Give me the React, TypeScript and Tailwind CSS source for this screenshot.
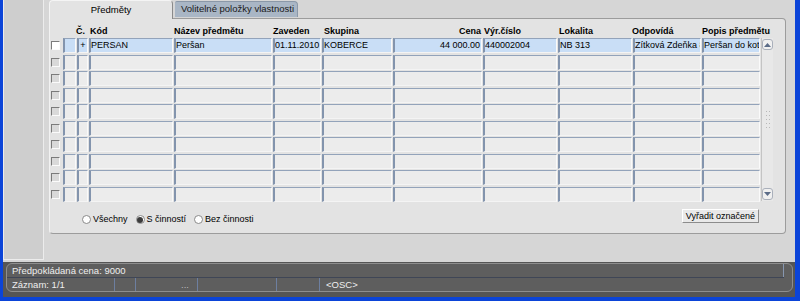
import React from "react";

const cells = [
  "w-[84px]",
  "w-[98px]",
  "w-[48px]",
  "w-[70px]",
  "w-[89px]",
  "w-[74px]",
  "w-[74px]",
  "w-[68px]",
  "w-[58px]",
];

const firstRow = [
  "PERSAN",
  "Peršan",
  "01.11.2010",
  "KOBERCE",
  "44 000.00",
  "440002004",
  "NB 313",
  "Zítková Zdeňka 8",
  "Peršan do kote",
];

function Cell({ w, text, active, right }: { w: string; text?: string; active?: boolean; right?: boolean }) {
  return (
    <div
      className={`${w} h-[15px] mr-px shrink-0 overflow-hidden whitespace-nowrap border-l-2 border-t border-r border-b border-l-[#8394ad] border-t-[#93a3ba] border-r-[#fafafa] border-b-[#f4f4f4] flex items-center leading-none text-[9px] text-black ${
        active ? "bg-[#c9def6]" : "bg-[#ececec]"
      } ${right ? "justify-end pr-[1px]" : "pl-0"}`}
    >
      {text}
    </div>
  );
}

function Row({ first }: { first?: boolean }) {
  return (
    <div className="flex h-[16.5px] items-start">
      <div className="w-[12px] h-[15px] flex items-center shrink-0">
        <div
          className={`w-[9px] h-[9px] border-t border-l border-[#7b7b7b] border-r border-b border-r-[#fbfbfb] border-b-[#fbfbfb] ${
            first ? "bg-white" : "bg-[#d9d9d9]"
          }`}
        />
      </div>
      <div className={`w-[13px] h-[15px] mr-px shrink-0 border-l-2 border-t border-r border-b border-l-[#8394ad] border-t-[#93a3ba] border-r-[#fafafa] border-b-[#f4f4f4] ${first ? "bg-[#c9def6]" : "bg-[#ececec]"}`} />
      <div className={`w-[11px] h-[15px] mr-px shrink-0 border-l-2 border-t border-r border-b border-l-[#8394ad] border-t-[#93a3ba] border-r-[#fafafa] border-b-[#f4f4f4] flex items-center justify-center text-[9px] leading-none ${first ? "bg-[#c9def6]" : "bg-[#ececec]"}`}>
        {first ? "+" : ""}
      </div>
      {cells.map((w, i) => (
        <Cell key={i} w={w} text={first ? firstRow[i] : ""} active={first} right={i === 4} />
      ))}
    </div>
  );
}

function Radio({ label, checked }: { label: string; checked?: boolean }) {
  return (
    <div className="flex items-center gap-[2px]">
      <div className="w-[9px] h-[9px] rounded-full border border-[#8a8a8a] bg-white flex items-center justify-center">
        {checked && <div className="w-[6px] h-[6px] rounded-full bg-[#3c3c3c]" />}
      </div>
      <span className="text-[9px] leading-none text-black">{label}</span>
    </div>
  );
}

export default function App() {
  return (
    <div className="w-[800px] h-[301px] bg-[#0b44d8] pl-[3px] pr-[5px] pb-[4px] flex flex-col font-['Liberation_Sans',Arial,sans-serif]">
      <div className="flex h-[262px] bg-[#d6d6d6]">
        <div className="w-[41px] h-[260px] bg-[#cecece] border-l border-r border-b border-[#ececec] shrink-0" />
        <div className="ml-[5px] w-[737px] flex flex-col">
          {/* tabs */}
          <div className="flex h-[18px] items-end">
            <div className="w-[124px] h-[19px] -mb-px bg-[#e3e3e3] border-l border-r border-t border-l-[#f4f4f4] border-t-[#f4f4f4] border-r-[#8a8a8a] rounded-t-[4px] flex items-center justify-center text-[9.5px] text-black z-10">
              Předměty
            </div>
            <div className="ml-[2px] w-[123px] h-[16px] mb-[1px] bg-[#a9b6c5] border-t border-r border-[#8b98a8] rounded-tr-[4px] rounded-tl-[2px] flex items-center pl-[6px] text-[9.5px] text-[#1a1a1a] whitespace-nowrap">
              Volitelné položky vlastnosti
            </div>
          </div>
          {/* panel */}
          <div className="h-[216px] bg-[#e3e3e3] border border-[#9c9c9c] border-l-[#f2f2f2] rounded-b-[4px] rounded-tr-[4px] pl-[1px] flex flex-col">
            <div className="flex h-[19px] items-end pb-[2px] text-[9px] font-bold text-black leading-none whitespace-nowrap">
              <div className="w-[25px] shrink-0" />
              <div className="w-[13px] shrink-0">Č.</div>
              <div className="w-[85px] shrink-0 pl-[1px]">Kód</div>
              <div className="w-[99px] shrink-0">Název předmětu</div>
              <div className="w-[49px] shrink-0">Zaveden</div>
              <div className="w-[71px] shrink-0 pl-[2px]">Skupina</div>
              <div className="w-[90px] shrink-0 text-right pr-[2px]">Cena</div>
              <div className="w-[75px] shrink-0 pl-[1px]">Výr.číslo</div>
              <div className="w-[75px] shrink-0 pl-[1px]">Lokalita</div>
              <div className="w-[69px] shrink-0 -ml-px">Odpovídá</div>
              <div className="w-[70px] shrink-0 pl-px">Popis předmětu</div>
            </div>
            <div className="flex">
              <div className="flex flex-col">
                <Row first />
                {Array.from({ length: 9 }, (_, i) => (
                  <Row key={i} />
                ))}
              </div>
              {/* scrollbar */}
              <div className="w-[12px] h-[163px] bg-[#e8e8e8] border-l border-[#c4c4c4] flex flex-col justify-between items-center py-[1px]">
                <div className="w-[11px] h-[11px] rounded-[3px] border border-[#aab0bb] bg-[#f0f0f0] flex items-center justify-center">
                  <svg width="7" height="4" viewBox="0 0 7 4"><path d="M0 4 L3.5 0 L7 4 Z" fill="#5b6c88" /></svg>
                </div>
                <div className="grid grid-cols-2 gap-x-[2px] gap-y-[3px]">
                  {Array.from({ length: 10 }, (_, i) => (
                    <div key={i} className="w-[1px] h-[1px] bg-[#b8b8b8]" />
                  ))}
                </div>
                <div className="w-[11px] h-[12px] rounded-[3px] border border-[#aab0bb] bg-[#f0f0f0] flex items-center justify-center">
                  <svg width="7" height="4" viewBox="0 0 7 4"><path d="M0 0 L3.5 4 L7 0 Z" fill="#5b6c88" /></svg>
                </div>
              </div>
            </div>
            <div className="flex items-center justify-between mt-[5px] pr-[26px]">
              <div className="flex gap-[8px] pl-[31px] mt-[7px]">
                <Radio label="Všechny" />
                <Radio label="S činností" checked />
                <Radio label="Bez činnosti" />
              </div>
              <div className="h-[14px] px-[3px] bg-[#e9e9e9] border border-t-white border-l-white border-r-[#8c8c8c] border-b-[#8c8c8c] flex items-center text-[9px] text-black leading-none">
                Vyřadit označené
              </div>
            </div>
          </div>
        </div>
      </div>
      {/* status bar */}
      <div className="h-[35px] bg-[#555555] pl-[3px] pr-[2px] pt-px pb-[5px]">
        <div className="h-full rounded-[6px] border border-[#8e8e8e] bg-[#5e5e5e] flex flex-col text-[9.5px] text-[#eeeeee] leading-none">
          <div className="h-[14px] flex items-center pl-[5px] border-b border-[#3f4656] mr-[8px]">
            <span className="flex-1">Předpokládaná cena: 9000</span>
            <div className="w-px h-full bg-[#8797b0]" />
          </div>
          <div className="flex-1 flex items-center">
            <div className="w-[107px] pl-[5px]">Záznam: 1/1</div>
            <div className="w-px h-full bg-[#6d7fa0]" />
            <div className="w-[20px]" />
            <div className="w-px h-full bg-[#6d7fa0]" />
            <div className="w-[61px] text-right pr-[8px] text-[#bdbdbd]">...</div>
            <div className="w-px h-full bg-[#6d7fa0]" />
            <div className="w-[78px]" />
            <div className="w-px h-full bg-[#6d7fa0]" />
            <div className="w-[42px]" />
            <div className="w-px h-full bg-[#6d7fa0]" />
            <div className="pl-[6px]">&lt;OSC&gt;</div>
          </div>
        </div>
      </div>
    </div>
  );
}
